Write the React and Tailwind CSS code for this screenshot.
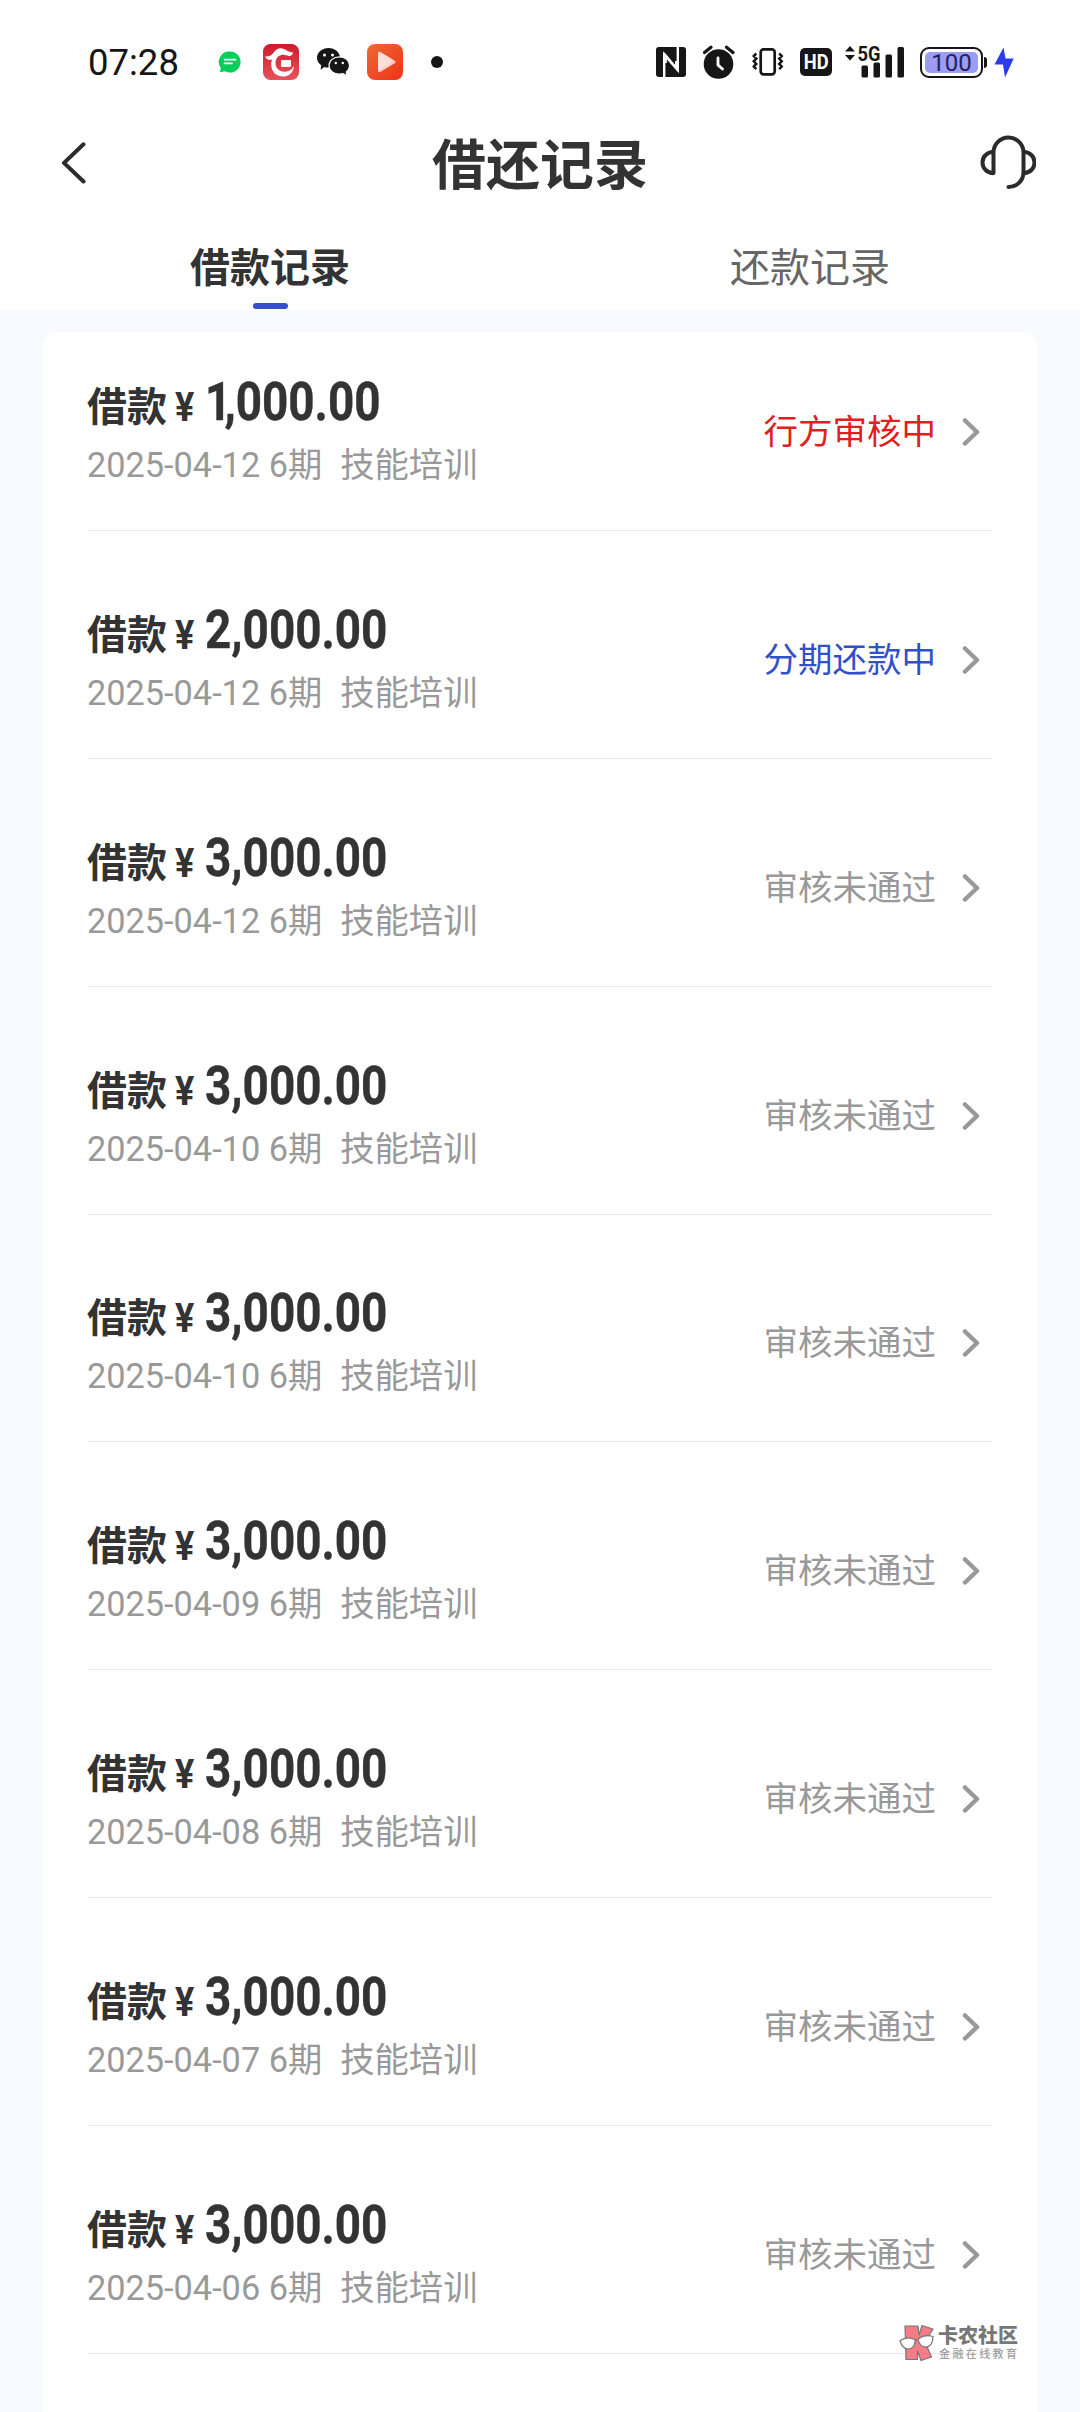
import React from "react";

const records = [
  { amount: "1,000.00", date: "2025-04-12", status: "行方审核中", tone: "text-[#e02020]" },
  { amount: "2,000.00", date: "2025-04-12", status: "分期还款中", tone: "text-[#3450c8]" },
  { amount: "3,000.00", date: "2025-04-12", status: "审核未通过", tone: "text-[#999999]" },
  { amount: "3,000.00", date: "2025-04-10", status: "审核未通过", tone: "text-[#999999]" },
  { amount: "3,000.00", date: "2025-04-10", status: "审核未通过", tone: "text-[#999999]" },
  { amount: "3,000.00", date: "2025-04-09", status: "审核未通过", tone: "text-[#999999]" },
  { amount: "3,000.00", date: "2025-04-08", status: "审核未通过", tone: "text-[#999999]" },
  { amount: "3,000.00", date: "2025-04-07", status: "审核未通过", tone: "text-[#999999]" },
  { amount: "3,000.00", date: "2025-04-06", status: "审核未通过", tone: "text-[#999999]" },
];

function MessageIcon() {
  return (
    <svg className="h-[22px] w-[23px]" viewBox="0 0 23 22">
      <path d="M12 0.5a10.5 10.5 0 1 1-5 19.7L1.8 21.3l1-4.2A10.5 10.5 0 0 1 12 0.5Z" fill="#06cf5a" />
      <path d="M6.5 8.6h11M6.5 12.4h7.5" stroke="#fff" strokeWidth="1.6" strokeLinecap="round" />
    </svg>
  );
}

function BankAppIcon() {
  return (
    <svg className="h-9 w-9" viewBox="0 0 36 36">
      <defs>
        <linearGradient id="bank" x1="0" y1="0" x2="0" y2="1">
          <stop offset="0" stopColor="#cf1a2c" />
          <stop offset="1" stopColor="#e8525a" />
        </linearGradient>
      </defs>
      <rect width="36" height="36" rx="7.5" fill="url(#bank)" />
      <path d="M2 12.5c4 .3 7-1 9-4.500C13.500 4.500 17 3.300 20.500 4.800c2.800 1.200 5.500 3.700 9.500 3.700-.3 2.500-2 3.700-4.500 3.400-1.800-.3-4-1.600-7-1-3.800.8-6 4-6 8.200 0 5.300 3.800 8.700 8.700 8.700 4.800 0 8.600-2.500 9.800-6.300-.2 6.800-5 11.100-11 11.100-7 0-11.800-5-11.800-12 0-2 .3-3.500 1-5-3.200.8-5.800-.2-7.200-3.100Z" fill="#fff" />
      <rect x="18" y="16" width="10" height="7" rx="1.200" fill="#fff" />
    </svg>
  );
}

function WechatIcon() {
  return (
    <svg className="h-7 w-[33px]" viewBox="0 0 33 28">
      <path d="M11.500 0C17.800 0 23 4.300 23 9.800s-5.200 9.800-11.500 9.800c-1.500 0-2.900-.2-4.200-.6L3.600 21.800l.6-4.500C1.700 15.500 0 12.800 0 9.800 0 4.300 5.200 0 11.500 0Z" fill="#161616" />
      <circle cx="7.500" cy="7" r="1.500" fill="#fff" />
      <circle cx="15.500" cy="7" r="1.500" fill="#fff" />
      <path d="M22.300 8.800c5.700 0 10.300 3.900 10.300 8.700 0 2.600-1.300 4.800-3.300 6.400l.5 3.900-3.700-2.100c-1.200.3-2.500.5-3.800.5-5.700 0-10.300-3.900-10.300-8.700s4.600-8.700 10.300-8.700Z" fill="#161616" stroke="#fff" strokeWidth="1.200" />
      <circle cx="18.800" cy="15" r="1.200" fill="#fff" />
      <circle cx="25.800" cy="15" r="1.200" fill="#fff" />
    </svg>
  );
}

function VideoIcon() {
  return (
    <svg className="h-9 w-9" viewBox="0 0 36 36">
      <defs>
        <linearGradient id="video" x1="0" y1="0" x2="1" y2="1">
          <stop offset="0" stopColor="#ef6a33" />
          <stop offset="1" stopColor="#ef3119" />
        </linearGradient>
      </defs>
      <rect width="36" height="36" rx="8" fill="url(#video)" />
      <path d="M11 9.300c0-1.300 1.200-2 2.300-1.400l14.500 8.800c1 .6 1 1.900 0 2.500l-14.500 8.700c-1.100.6-2.300-.1-2.300-1.400Z" fill="#fff" opacity=".72" />
      <path d="M11 9.300c0-1.300 1.200-2 2.300-1.400l11 6.600c1 2 .3 4-2 5.500L11 27Z" fill="#fff" opacity=".35" />
    </svg>
  );
}

function NfcIcon() {
  return (
    <svg className="h-[30px] w-[30px]" viewBox="0 0 30 30">
      <rect width="30" height="30" rx="3" fill="#161616" />
      <path d="M8.200 30V7.500L20.300 21.500V14M21.800 0V23L9.700 8.500V16" fill="none" stroke="#fff" strokeWidth="2.400" />
    </svg>
  );
}

function AlarmIcon() {
  return (
    <svg className="h-[34px] w-8" viewBox="0 0 32 34">
      <circle cx="15.500" cy="19" r="14.800" fill="#161616" />
      <path d="M1.500 7.500 8 2.200M30 7.500l-6.500-5.300" stroke="#161616" strokeWidth="3.200" strokeLinecap="round" />
      <path d="M15 13v7l4.500 4" fill="none" stroke="#fff" strokeWidth="2.800" strokeLinecap="round" />
    </svg>
  );
}

function VibrateIcon() {
  return (
    <svg className="h-7 w-8" viewBox="0 0 32 28" fill="none" stroke="#161616">
      <rect x="8.700" y="1.400" width="14" height="25" rx="2.800" strokeWidth="2.700" />
      <path d="M4.300 5.500 1.800 8l2.500 2.600-2.500 2.700 2.500 2.600-2.500 2.600 2.500 2.700M27.200 5.500 29.700 8l-2.500 2.600 2.500 2.700-2.500 2.600 2.500 2.600-2.500 2.700" strokeWidth="2.500" />
    </svg>
  );
}

function SignalIcon() {
  return (
    <svg className="h-11 w-[60px]" viewBox="0 -6 60 44" fill="#161616">
      <path d="M5 0l5 5.500H0ZM5 14.500l5-5.500H0Z" />
      <text x="12.500" y="14.500" fontFamily="Roboto, sans-serif" fontWeight="700" fontSize="19.500" textLength="23" lengthAdjust="spacingAndGlyphs">5G</text>
      <rect x="16.500" y="19.500" width="6.500" height="12" rx="1.500" />
      <rect x="28.500" y="16.500" width="6.500" height="15" rx="1.500" />
      <rect x="40.500" y="8.500" width="6.500" height="23" rx="1.500" />
      <rect x="52.500" y="1" width="6.500" height="30.500" rx="1.500" />
    </svg>
  );
}

function StatusBar() {
  return (
    <div className="flex h-[124px] w-full items-center pl-[88px] text-[#161616]">
      <span className="w-[130px] pt-[2px] text-[36.500px] leading-none">07:28</span>
      <MessageIcon />
      <span className="ml-[22px]"><BankAppIcon /></span>
      <span className="ml-[18px]"><WechatIcon /></span>
      <span className="ml-[17px]"><VideoIcon /></span>
      <span className="ml-7 size-3 rounded-full bg-[#161616]" />
      <div className="ml-auto flex items-center pr-[66px]">
        <NfcIcon />
        <span className="ml-[17px]"><AlarmIcon /></span>
        <span className="ml-[17px]"><VibrateIcon /></span>
        <span className="ml-4 flex h-7 w-8 items-center justify-center rounded-[5px] bg-[#161616] pt-px text-[21px] font-bold leading-none text-white">
          <span className="scale-x-[0.870]">HD</span>
        </span>
        <span className="ml-[13px]"><SignalIcon /></span>
        <span className="ml-[15px] flex h-[31px] w-[63px] rounded-[9px] border-2 border-[#161616] p-[3px]">
          <span className="flex flex-1 items-center justify-center rounded-[5px] bg-[#9c9cf3] pt-[2px] text-[24px] leading-none text-[#23235c]">100</span>
        </span>
        <span className="ml-[1px] h-[11px] w-[3px] rounded-r bg-[#161616]" />
        <svg className="ml-[7px] h-[31px] w-5" viewBox="0 0 20 31">
          <path d="M9.500 0.500 0.500 17.500h8.500L11 30.500l8.700-19H11.500Z" fill="#2b3ce8" />
        </svg>
      </div>
    </div>
  );
}

function Header() {
  return (
    <div className="flex h-[80px] items-center justify-between pl-[61px] pr-[44px]">
      <svg className="h-[44px] w-[55px]" viewBox="0 0 55 44">
        <path d="M22.500 2.300 3 20.900 22.500 39.500" fill="none" stroke="#2b2b2b" strokeWidth="4" strokeLinecap="round" strokeLinejoin="round" />
      </svg>
      <h1 className="-ml-[16px] pt-[5px] text-[54px] font-bold leading-none text-[#333333]">借还记录</h1>
      <svg className="mb-1 h-[56px] w-[56px]" viewBox="0 0 56 56" fill="none" stroke="#2b2b2b" strokeWidth="4">
        <path d="M13.500 39V18.500a15 15 0 0 1 30 0V38c0 8.500-6.500 15-15 15" strokeLinecap="round" />
        <path d="M13.500 17.800C6.500 18.200 2.500 23 2.500 28.500S6.500 38.800 13.500 39.200M43.500 17.800c7 .4 11 5.200 11 10.700s-4 10.300-11 10.700" />
      </svg>
    </div>
  );
}

function Tabs() {
  return (
    <div className="grid h-[106px] grid-cols-2 text-center text-[40px] leading-none">
      <div className="flex flex-col items-center pt-[45px] font-bold text-[#333333]">
        <span>借款记录</span>
        <span className="mt-[14px] h-[6px] w-[35px] rounded-full bg-[#3650cc]" />
      </div>
      <div className="pt-[45px] text-[#666666]">还款记录</div>
    </div>
  );
}

function Row({ record }) {
  return (
    <div className="flex h-[227.900px] items-end justify-between border-b border-[#ebebeb] pb-[45px]">
      <div className="flex flex-col">
        <div className="flex h-[52px] items-baseline text-[#333333]">
          <span className="text-[40px] font-bold leading-[52px]">借款</span>
          <span className="ml-[8px] w-[30px] text-[41px] font-bold leading-none">
            <span className="inline-block origin-left scale-x-[0.880]">¥</span>
          </span>
          <span className="relative -top-px inline-block origin-left scale-x-[0.865] text-[53px] font-bold leading-none [-webkit-text-stroke:0.4px_#333333]">
            {record.amount.startsWith("1") ? <span className="tracking-[-8px]">1</span> : record.amount[0]}
            {record.amount.slice(1)}
          </span>
        </div>
        <div className="mt-[16px] whitespace-pre text-[34.300px] leading-[40px] text-[#999999]">
          {record.date + " 6期 "}<span className="pl-px">{" 技能培训"}</span>
        </div>
      </div>
      <div className="mb-[33px] flex items-center pr-[12px]">
        <span className={"text-[34.500px] leading-[40px] " + record.tone}>{record.status}</span>
        <svg className="ml-[26px] h-[30px] w-[19px]" viewBox="0 0 19 30">
          <path d="M3 3.500 15 15 3 26.500" fill="none" stroke="#999" strokeWidth="4.500" strokeLinecap="round" strokeLinejoin="round" />
        </svg>
      </div>
    </div>
  );
}

function Watermark() {
  return (
    <div className="absolute left-[899px] top-[2324px] flex">
      <svg className="h-[38px] w-[37px]" viewBox="0 0 37 38">
        <g fill="#f47c86" stroke="#777" strokeWidth="1.200" strokeLinejoin="round">
          <path d="M6 2h13l1 9L23 1.500 34 5 26 18 32.500 33 22 36.500 18.500 27v8.500H7Z" />
        </g>
        <path d="M1 16.500c5-3 11-3 15-1 .5 7-3 9.500-7 9.500s-6.500-3-8-8.500ZM19 15c4-3 10-4 15-2.500 0 6.500-3 10.500-7 10.500s-7-3-8-8Z" fill="#fff" stroke="#777" strokeWidth="1.200" />
        <path d="M16 16.500l3-1" stroke="#777" strokeWidth="1.200" />
      </svg>
      <div className="flex flex-col pl-[2px] pt-[2px]">
        <span className="text-[20px] font-black leading-[21px] text-[#777777]">卡农社区</span>
        <span className="pl-px pt-px text-[11px] font-medium leading-[13px] tracking-[2.400px] text-[#a0a0a0]">金融在线教育</span>
      </div>
    </div>
  );
}

export default function App() {
  return (
    <div className="relative h-[2412px] w-[1080px] overflow-hidden bg-[#f9faff] font-['Roboto','Noto_Sans_CJK_SC',sans-serif]">
      <div className="h-[310px] bg-white">
        <StatusBar />
        <Header />
        <Tabs />
      </div>
      <div className="mx-[43px] mt-[22px] flex h-[2100px] flex-col rounded-t-[15px] bg-white px-[44px]">
        <div className="-mt-[29px]">
          {records.map((record, i) => (
            <Row key={i} record={record} />
          ))}
        </div>
      </div>
      <Watermark />
    </div>
  );
}
